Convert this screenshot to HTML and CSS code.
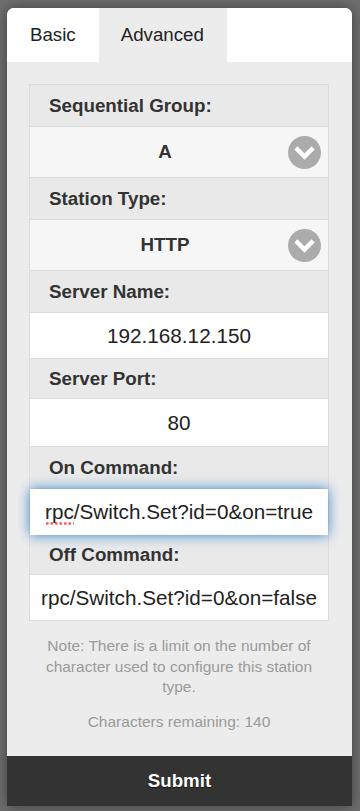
FILE: index.html
```html
<!DOCTYPE html>
<html lang="en">
<head>
    <meta charset="UTF-8">
    <meta name="viewport" content="width=device-width, initial-scale=1.0">
    <title>Station Options</title>
    <link rel="stylesheet" href="styles.css">
</head>
<body>
    <div class="dialog">
        <div class="tabs">
            <div class="tab">Basic</div>
            <div class="tab active">Advanced</div>
        </div>

        <div class="content">
            <div class="list">
                <div class="label">Sequential Group:</div>
                <div class="select">
                    <span>A</span>
                    <svg class="chevron" viewBox="0 0 33 33" width="33" height="33">
                        <circle cx="16.5" cy="16.5" r="16.5" fill="#ababab"/>
                        <polyline points="9.5,13.5 16.5,20.5 23.5,13.5" fill="none" stroke="#fff" stroke-width="4.5" stroke-linecap="square"/>
                    </svg>
                </div>

                <div class="label">Station Type:</div>
                <div class="select">
                    <span>HTTP</span>
                    <svg class="chevron" viewBox="0 0 33 33" width="33" height="33">
                        <circle cx="16.5" cy="16.5" r="16.5" fill="#ababab"/>
                        <polyline points="9.5,13.5 16.5,20.5 23.5,13.5" fill="none" stroke="#fff" stroke-width="4.5" stroke-linecap="square"/>
                    </svg>
                </div>

                <div class="label">Server Name:</div>
                <input class="field" type="text" value="192.168.12.150">

                <div class="label short">Server Port:</div>
                <input class="field tall" type="text" value="80">

                <div class="label">On Command:</div>
                <div class="field focused"><span class="typo">rpc</span>/Switch.Set?id=0&amp;on=true</div>

                <div class="label short">Off Command:</div>
                <input class="field" type="text" value="rpc/Switch.Set?id=0&amp;on=false">
            </div>

            <p class="note">Note: There is a limit on the number of character used to configure this station type.</p>
            <p class="remaining">Characters remaining: 140</p>
        </div>

        <button class="submit" type="button">Submit</button>
    </div>
</body>
</html>
```

FILE: styles.css
```css
body {
    margin: 0;
    padding: 8px 8px 5px 7px;
    background: #6f6f6f;
    font-family: "Liberation Sans", Arial, sans-serif;
}

.dialog {
    width: 345px;
    height: 798px;
    display: flex;
    flex-direction: column;
    background: #ececec;
    border-radius: 7px 7px 0 0;
    overflow: hidden;
    box-shadow: 0 0 14px rgba(0, 0, 0, 0.45);
}

.tabs {
    display: flex;
    height: 54px;
    background: #fff;
}

.tab {
    padding: 0 23px 0 23px;
    font-size: 18.7px;
    line-height: 54px;
    color: #222;
}

.tab.active {
    background: #ececec;
    padding: 0 23px 0 22px;
}

.content {
    flex: 1;
    padding: 22px 23px 0 22px;
}

.list {
    display: flex;
    flex-direction: column;
    border: 1px solid #dcdcdc;
    border-bottom: none;
}

.label {
    height: 41px;
    line-height: 41px;
    padding-left: 19px;
    font-size: 18.8px;
    font-weight: bold;
    color: #333;
    background: #e9e9e9;
    border-bottom: 1px solid #dcdcdc;
}

.label.short {
    height: 39px;
    line-height: 39px;
}

.select {
    position: relative;
    height: 50px;
    line-height: 50px;
    padding: 0 43px 0 15px;
    text-align: center;
    font-size: 18.8px;
    font-weight: bold;
    color: #333;
    background: #f6f6f6;
    border-bottom: 1px solid #dcdcdc;
}

.chevron {
    position: absolute;
    right: 7px;
    top: 9px;
}

.field {
    display: block;
    box-sizing: border-box;
    width: 100%;
    height: 46px;
    margin: 0;
    padding: 0 1px;
    border: none;
    border-bottom: 1px solid #dcdcdc;
    background: #fff;
    font-family: "Liberation Sans", Arial, sans-serif;
    font-size: 20.7px;
    line-height: 46px;
    color: #222;
    text-align: center;
    white-space: nowrap;
}

.field.tall {
    height: 48px;
}

.focused {
    position: relative;
    z-index: 1;
    border-bottom: none;
    box-shadow: 0 0 12px #3a85c8;
}

.typo {
    background-image: radial-gradient(circle, #f06060 1.3px, transparent 1.4px);
    background-size: 4.5px 3px;
    background-repeat: repeat-x;
    background-position: 0 bottom;
    padding-bottom: 2px;
}

.note {
    margin: 15px 14px 0 14px;
    font-size: 15.5px;
    line-height: 20.5px;
    color: #9a9a9a;
    text-align: center;
}

.remaining {
    margin: 14px 0 0;
    font-size: 15.5px;
    line-height: 20.5px;
    color: #9a9a9a;
    text-align: center;
}

.submit {
    height: 50px;
    width: 100%;
    border: none;
    background: #333;
    color: #fff;
    font-family: "Liberation Sans", Arial, sans-serif;
    font-size: 18.7px;
    font-weight: bold;
    text-shadow: 0 1px 1px #111;
    cursor: pointer;
}
```
